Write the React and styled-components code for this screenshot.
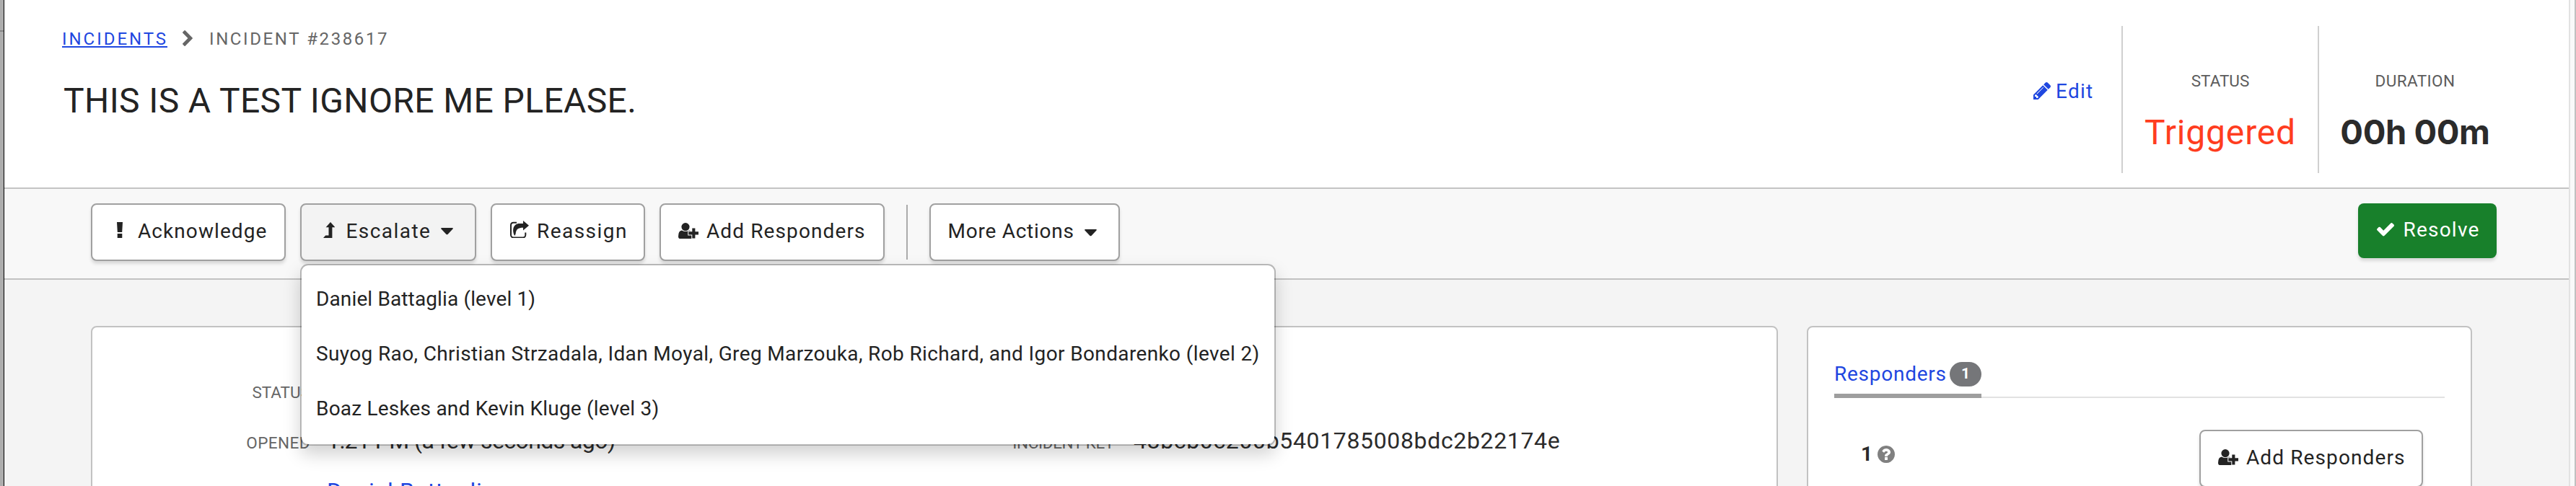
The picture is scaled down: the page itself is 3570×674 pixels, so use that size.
import React from "react";
import styled, { createGlobalStyle, css } from "styled-components";

const GlobalStyle = createGlobalStyle`
  *, *::before, *::after { box-sizing: border-box; }
  body { margin: 0; overflow: hidden; font-family: Roboto, "Liberation Sans", sans-serif; color: #232323; }
`;

const Page = styled.div`
  display: flex;
  width: 3570px;
  height: 674px;
  overflow: hidden;
  background: #f4f4f4;
`;

const WindowEdge = styled.div`
  flex: 0 0 6px;
  background: #adadad;
  border-right: 1px solid #000;
  padding-top: 42px;
  &::before { content: ""; display: block; height: 2px; background: #868686; }
`;

const Scrollbar = styled.div`
  flex: 0 0 10px;
  background: #f9f9f9;
  border-left: 2px solid #e2e2e2;
  border-right: 2px solid #c0c0c0;
`;

const Main = styled.main`
  flex: 1;
  min-width: 0;
`;

const Text = styled.span`
  white-space: nowrap;
  letter-spacing: ${(p) => p.$ls || 0}px;
`;

/* ---------- header ---------- */

const Header = styled.header`
  display: flex;
  height: 262px;
  padding: 0 80px;
  background: #fff;
  border-bottom: 2px solid #c4c4c4;
`;

const Heading = styled.div`
  padding-top: 44px;
`;

const Crumbs = styled.nav`
  display: flex;
  height: 22px;
  font-size: 24px;
  line-height: 20px;
  color: #666;
`;

const CrumbLink = styled.a`
  width: 146px;
  height: 22px;
  border-bottom: 2px solid #1f47e0;
  color: #1f47e0;
  letter-spacing: 2.97px;
  white-space: nowrap;
`;

const CrumbArrow = styled.svg`
  width: 14px;
  height: 22px;
  margin: -2px 23px 0 21px;
  fill: #666;
`;

const Title = styled.h1`
  margin: 44px 0 0 2px;
  font-size: 48px;
  font-weight: 400;
  line-height: 60px;
  letter-spacing: 0.38px;
  white-space: nowrap;
`;

const EditLink = styled.a`
  display: flex;
  width: 122px;
  height: 30px;
  margin: 112px 0 0 auto;
  gap: 7px;
  align-items: center;
  font-size: 28px;
  line-height: 28px;
  color: #1f47e0;
`;

const Stat = styled.div`
  width: ${(p) => p.$width}px;
  height: 204px;
  margin-top: 36px;
  padding-top: 64px;
  border-left: 2px solid #d0d0d0;
  text-align: center;
`;

const StatLabel = styled.div`
  font-size: 22.5px;
  line-height: 24px;
  color: #5c5c5c;
  letter-spacing: ${(p) => p.$ls || 0}px;
`;

const StatValue = styled.div`
  margin-top: 30px;
  font-size: 48px;
  line-height: 60px;
  white-space: nowrap;
  color: #ff3d1f;
  letter-spacing: ${(p) => p.$ls || 0}px;
  ${(p) =>
    p.$strong &&
    css`
      font-family: Inter, Roboto, sans-serif;
      font-size: 47px;
      line-height: 58px;
      font-weight: 700;
      color: #2b2b2b;
    `}
`;

/* ---------- toolbar ---------- */

const Toolbar = styled.div`
  display: flex;
  align-items: flex-start;
  height: 126px;
  padding: 20px 100px 0 120px;
  background: #f8f8f8;
  border-bottom: 2px solid #c2c2c2;
`;

const ButtonGroup = styled.div`
  display: flex;
  gap: 20px;
`;

const Button = styled.button`
  display: flex;
  align-items: center;
  width: ${(p) => p.$width}px;
  height: 80px;
  padding: 0 30px 3px ${(p) => p.$inset}px;
  border: 2px solid #a0a0a0;
  border-radius: 8px;
  background: ${(p) => (p.$active ? "#f3f3f3" : "#fff")};
  box-shadow: 0 4px 4px rgba(0, 0, 0, 0.12);
  color: #232323;
  font: 400 28px/34px Roboto, "Liberation Sans", sans-serif;
  ${(p) =>
    p.$primary &&
    css`
      height: 76px;
      margin-left: auto;
      border: 0;
      background: #18802b;
      color: #fff;
    `}
`;

const Icon = styled.svg`
  flex: none;
  width: ${(p) => p.$w}px;
  height: ${(p) => p.$h}px;
  margin-right: ${(p) => p.$gap || 0}px;
  margin-bottom: ${(p) => p.$lift || 0}px;
  fill: currentColor;
`;

const CaretIcon = styled.svg`
  flex: none;
  width: 17px;
  height: 10px;
  margin-left: auto;
  margin-top: ${(p) => p.$drop || 0}px;
  fill: #232323;
`;

const Divider = styled.div`
  width: 2px;
  height: 76px;
  margin: 2px 30px 0;
  background: #ababab;
`;

const MenuAnchor = styled.div`
  position: relative;
`;

const Menu = styled.ul`
  position: absolute;
  top: 84px;
  left: 0;
  z-index: 10;
  width: 1352px;
  height: 252px;
  margin: 0;
  padding: 9px 10px 11px 20px;
  list-style: none;
  background: #fff;
  background-clip: padding-box;
  border: 2px solid rgba(0, 0, 0, 0.25);
  border-radius: 11px;
  box-shadow: 0 12px 24px rgba(0, 0, 0, 0.18);
`;

const MenuItem = styled.li`
  font-size: 28px;
  line-height: 76px;
  white-space: nowrap;
  letter-spacing: ${(p) => p.$ls}px;
`;

/* ---------- content ---------- */

const Content = styled.div`
  display: flex;
  gap: 40px;
  padding: 64px 0 0 120px;
`;

const Card = styled.section`
  display: ${(p) => (p.$split ? "flex" : "block")};
  width: ${(p) => p.$width}px;
  height: 400px;
  padding: ${(p) => p.$pad};
  background: #fff;
  border: 2px solid #c2c2c2;
  border-radius: 8px;
`;

const Details = styled.div`
  width: ${(p) => p.$width}px;
  padding-top: ${(p) => p.$top || 0}px;
`;

const DetailRow = styled.div`
  display: flex;
  align-items: baseline;
  height: 70px;
  font-size: 32px;
  line-height: 70px;
  white-space: nowrap;
  color: ${(p) => (p.$link ? "#1f47e0" : "#2b2b2b")};
`;

const DetailLabel = styled.div`
  flex: none;
  width: ${(p) => p.$width}px;
  margin-right: ${(p) => p.$gap}px;
  font-size: 22.5px;
  line-height: 24px;
  text-align: right;
  color: #666;
  letter-spacing: ${(p) => p.$ls || 0}px;
`;

const Tabs = styled.div`
  display: flex;
  height: 68px;
  border-bottom: 2px solid #e2e2e2;
`;

const Tab = styled.div`
  display: flex;
  align-items: center;
  justify-content: space-between;
  width: 204px;
  height: 68px;
  padding-top: 8px;
  border-bottom: 6px solid #9e9e9e;
  font-size: 28px;
  line-height: 34px;
  color: #1f47e0;
`;

const Badge = styled.span`
  width: 44px;
  height: 34px;
  border-radius: 17px;
  background: #757679;
  color: #fff;
  font-size: 21px;
  font-weight: 700;
  line-height: 33px;
  text-align: center;
`;

const ResponderRow = styled.div`
  display: flex;
  align-items: flex-start;
  justify-content: space-between;
  padding: 44px 30px 0 37px;
`;

const Count = styled.div`
  display: flex;
  align-items: center;
  margin-top: 20px;
  font-size: 28px;
  font-weight: 700;
  line-height: 28px;
  color: #808080;
`;

const CountNumber = styled.span`
  width: 23px;
  color: #2b2b2b;
`;

const Caret = ({ drop }) => (
  <CaretIcon $drop={drop} viewBox="0 0 17 10">
    <path d="M1 0H16Q17.300 .4 16.500 1.500L9.500 8.900Q8.500 9.800 7.500 8.900L.5 1.500Q-.3 .4 1 0Z" />
  </CaretIcon>
);

const Exclamation = () => (
  <Icon $w={8} $h={22} $gap={21} $lift={3} viewBox="0 0 8 22">
    <path d="M0 0H8L7.200 14H.8ZM.7 16H7.300V22H.7Z" />
  </Icon>
);

const LevelUp = () => (
  <Icon $w={16.5} $h={22} $gap={15.3} $lift={3} viewBox="0 0 16.5 22">
    <path d="M10 0L16.500 7.300H12.400V22H0L3.200 18.500H7.500V7.300H3.600Z" />
  </Icon>
);

const Share = () => (
  <Icon $w={26} $h={24.5} $gap={11} $lift={5} viewBox="0 0 26 24.5">
    <path
      d="M9 2.800H4.600Q1 2.800 1 6.400V19.800Q1 23.400 4.600 23.400H17.800Q21.300 23.400 21.300 19.800V16.500"
      fill="none"
      stroke="currentColor"
      strokeWidth="2"
    />
    <path d="M18 0L26 6.700L18 13.400V9.800C11.500 9.800 8.200 11.500 7.600 18.500L6.300 21C2.500 14.500 3.500 4 13 4H18Z" />
  </Icon>
);

const UserPlus = () => (
  <Icon $w={28.3} $h={22.3} $gap={10.7} $lift={1} viewBox="0 0 28.3 22.3">
    <circle cx="10" cy="5.600" r="5.600" />
    <path d="M5 10.400Q10 13.800 15 10.400Q19 11 19.500 16V22.300H3.400Q0 22.300 0 19Q0 10.800 5 10.400Z" />
    <path
      d="M19.300 7.400H23.400V12.300H28.300V16.400H23.400V21.600H19.300V16.400H14.300V12.300H19.300Z"
      stroke="#fff"
      strokeWidth="2"
      paintOrder="stroke"
    />
  </Icon>
);

const Check = () => (
  <Icon $w={24} $h={18.5} $gap={12.5} viewBox="121 334 1550 1188">
    <path d="M1671 566q0 40-28 68l-724 724-136 136q-28 28-68 28t-68-28l-136-136-362-362q-28-28-28-68t28-68l136-136q28-28 68-28t68 28l294 295 656-657q28-28 68-28t68 28l136 136q28 28 28 68z" />
  </Icon>
);

const Pencil = () => (
  <Icon $w={24} $h={24} $lift={2} viewBox="128 149 1515 1515">
    <path d="M491 1536l91-91-235-235-91 91v107h128v128h107zm523-928q0-22-22-22-10 0-17 7l-542 542q-7 7-7 17 0 22 22 22 10 0 17-7l542-542q7-7 7-17zm-54-192l416 416-832 832h-416v-416zm683 96q0 53-37 90l-166 166-416-416 166-165q36-38 90-38 53 0 91 38l235 234q37 39 37 91z" />
  </Icon>
);

const Question = () => (
  <Icon $w={24} $h={24} viewBox="128 128 1536 1536">
    <path d="M1024 1376v-192q0-14-9-23t-23-9h-192q-14 0-23 9t-9 23v192q0 14 9 23t23 9h192q14 0 23-9t9-23zm256-672q0-88-55.5-163t-138.5-116-170-41q-243 0-371 213-15 24 8 42l132 100q7 6 19 6 16 0 25-12 53-68 86-92 34-24 86-24 48 0 85.500 26t37.500 59q0 38-20 61t-68 45q-63 28-115.500 86.500t-52.500 125.500v36q0 14 9 23t23 9h192q14 0 23-9t9-23q0-19 21.500-49.500t54.500-49.500q32-18 49-28.500t46-35 44.500-48 28-60.500 12.500-81zm384 192q0 209-103 385.500t-279.500 279.500-385.500 103-385.500-103-279.500-279.500-103-385.500 103-385.500 279.500-279.500 385.500-103 385.500 103 279.500 279.500 103 385.500z" />
  </Icon>
);

export default function App() {
  return (
    <>
      <GlobalStyle />
      <Page>
        <WindowEdge />
        <Main>
          <Header>
            <Heading>
              <Crumbs>
                <CrumbLink>INCIDENTS</CrumbLink>
                <CrumbArrow viewBox="346 26 1036 1612">
                  <path d="M1363 877l-742 742q-19 19-45 19t-45-19l-166-166q-19-19-19-45t19-45l531-531-531-531q-19-19-19-45t19-45l166-166q19-19 45-19t45 19l742 742q19 19 19 45t-19 45z" />
                </CrumbArrow>
                <Text $ls={2.6}>INCIDENT #238617</Text>
              </Crumbs>
              <Title>THIS IS A TEST IGNORE ME PLEASE.</Title>
            </Heading>
            <EditLink>
              <Pencil />
              <Text $ls={1.25}>Edit</Text>
            </EditLink>
            <Stat $width={272}>
              <StatLabel>STATUS</StatLabel>
              <StatValue $ls={0.82}>Triggered</StatValue>
            </Stat>
            <Stat $width={268}>
              <StatLabel $ls={0.43}>DURATION</StatLabel>
              <StatValue $strong $ls={-0.4}>00h 00m</StatValue>
            </Stat>
          </Header>

          <Toolbar>
            <ButtonGroup>
              <Button $width={270} $inset={34}>
                <Exclamation />
                <Text $ls={1.07}>Acknowledge</Text>
              </Button>
              <MenuAnchor>
                <Button $active $width={244} $inset={29.7}>
                  <LevelUp />
                  <Text $ls={1.44}>Escalate</Text>
                  <Caret />
                </Button>
                <Menu>
                  <MenuItem $ls={0.13}>Daniel Battaglia (level 1)</MenuItem>
                  <MenuItem $ls={0.37}>
                    Suyog Rao, Christian Strzadala, Idan Moyal, Greg Marzouka, Rob Richard, and Igor
                    Bondarenko (level 2)
                  </MenuItem>
                  <MenuItem $ls={0.2}>Boaz Leskes and Kevin Kluge (level 3)</MenuItem>
                </Menu>
              </MenuAnchor>
              <Button $width={214} $inset={25}>
                <Share />
                <Text $ls={1.46}>Reassign</Text>
              </Button>
              <Button $width={312} $inset={24}>
                <UserPlus />
                <Text $ls={1.11}>Add Responders</Text>
              </Button>
            </ButtonGroup>
            <Divider />
            <Button $width={264} $inset={23.5}>
              <Text $ls={0.75}>More Actions</Text>
              <Caret drop={4} />
            </Button>
            <Button $primary $width={192} $inset={26}>
              <Check />
              <Text $ls={1.21}>Resolve</Text>
            </Button>
          </Toolbar>

          <Content>
            <Card $split $width={2338} $pad="52px 0 0">
              <Details $width={1172}>
                <DetailRow>
                  <DetailLabel $width={302} $gap={23}>STATUS</DetailLabel>
                  <Text>Triggered</Text>
                </DetailRow>
                <DetailRow>
                  <DetailLabel $width={302} $gap={23} $ls={0.44}>OPENED</DetailLabel>
                  <Text $ls={-0.58}>1:21 PM (a few seconds ago)</Text>
                </DetailRow>
                <DetailRow $link>
                  <DetailLabel $width={302} $gap={23} />
                  <Text $ls={0.64}>Daniel Battaglia</Text>
                </DetailRow>
              </Details>
              <Details $width={1000} $top={70}>
                <DetailRow>
                  <DetailLabel $width={244} $gap={27} $ls={-0.38}>INCIDENT KEY</DetailLabel>
                  <Text $ls={0.64}>48bcb0c200b5401785008bdc2b22174e</Text>
                </DetailRow>
              </Details>
            </Card>

            <Card $width={922} $pad="30px 36px 0">
              <Tabs>
                <Tab>
                  <Text $ls={0.75}>Responders</Text>
                  <Badge>1</Badge>
                </Tab>
              </Tabs>
              <ResponderRow>
                <Count>
                  <CountNumber>1</CountNumber>
                  <Question />
                </Count>
                <Button $width={310} $inset={24}>
                  <UserPlus />
                  <Text $ls={1.11}>Add Responders</Text>
                </Button>
              </ResponderRow>
            </Card>
          </Content>
        </Main>
        <Scrollbar />
      </Page>
    </>
  );
}
